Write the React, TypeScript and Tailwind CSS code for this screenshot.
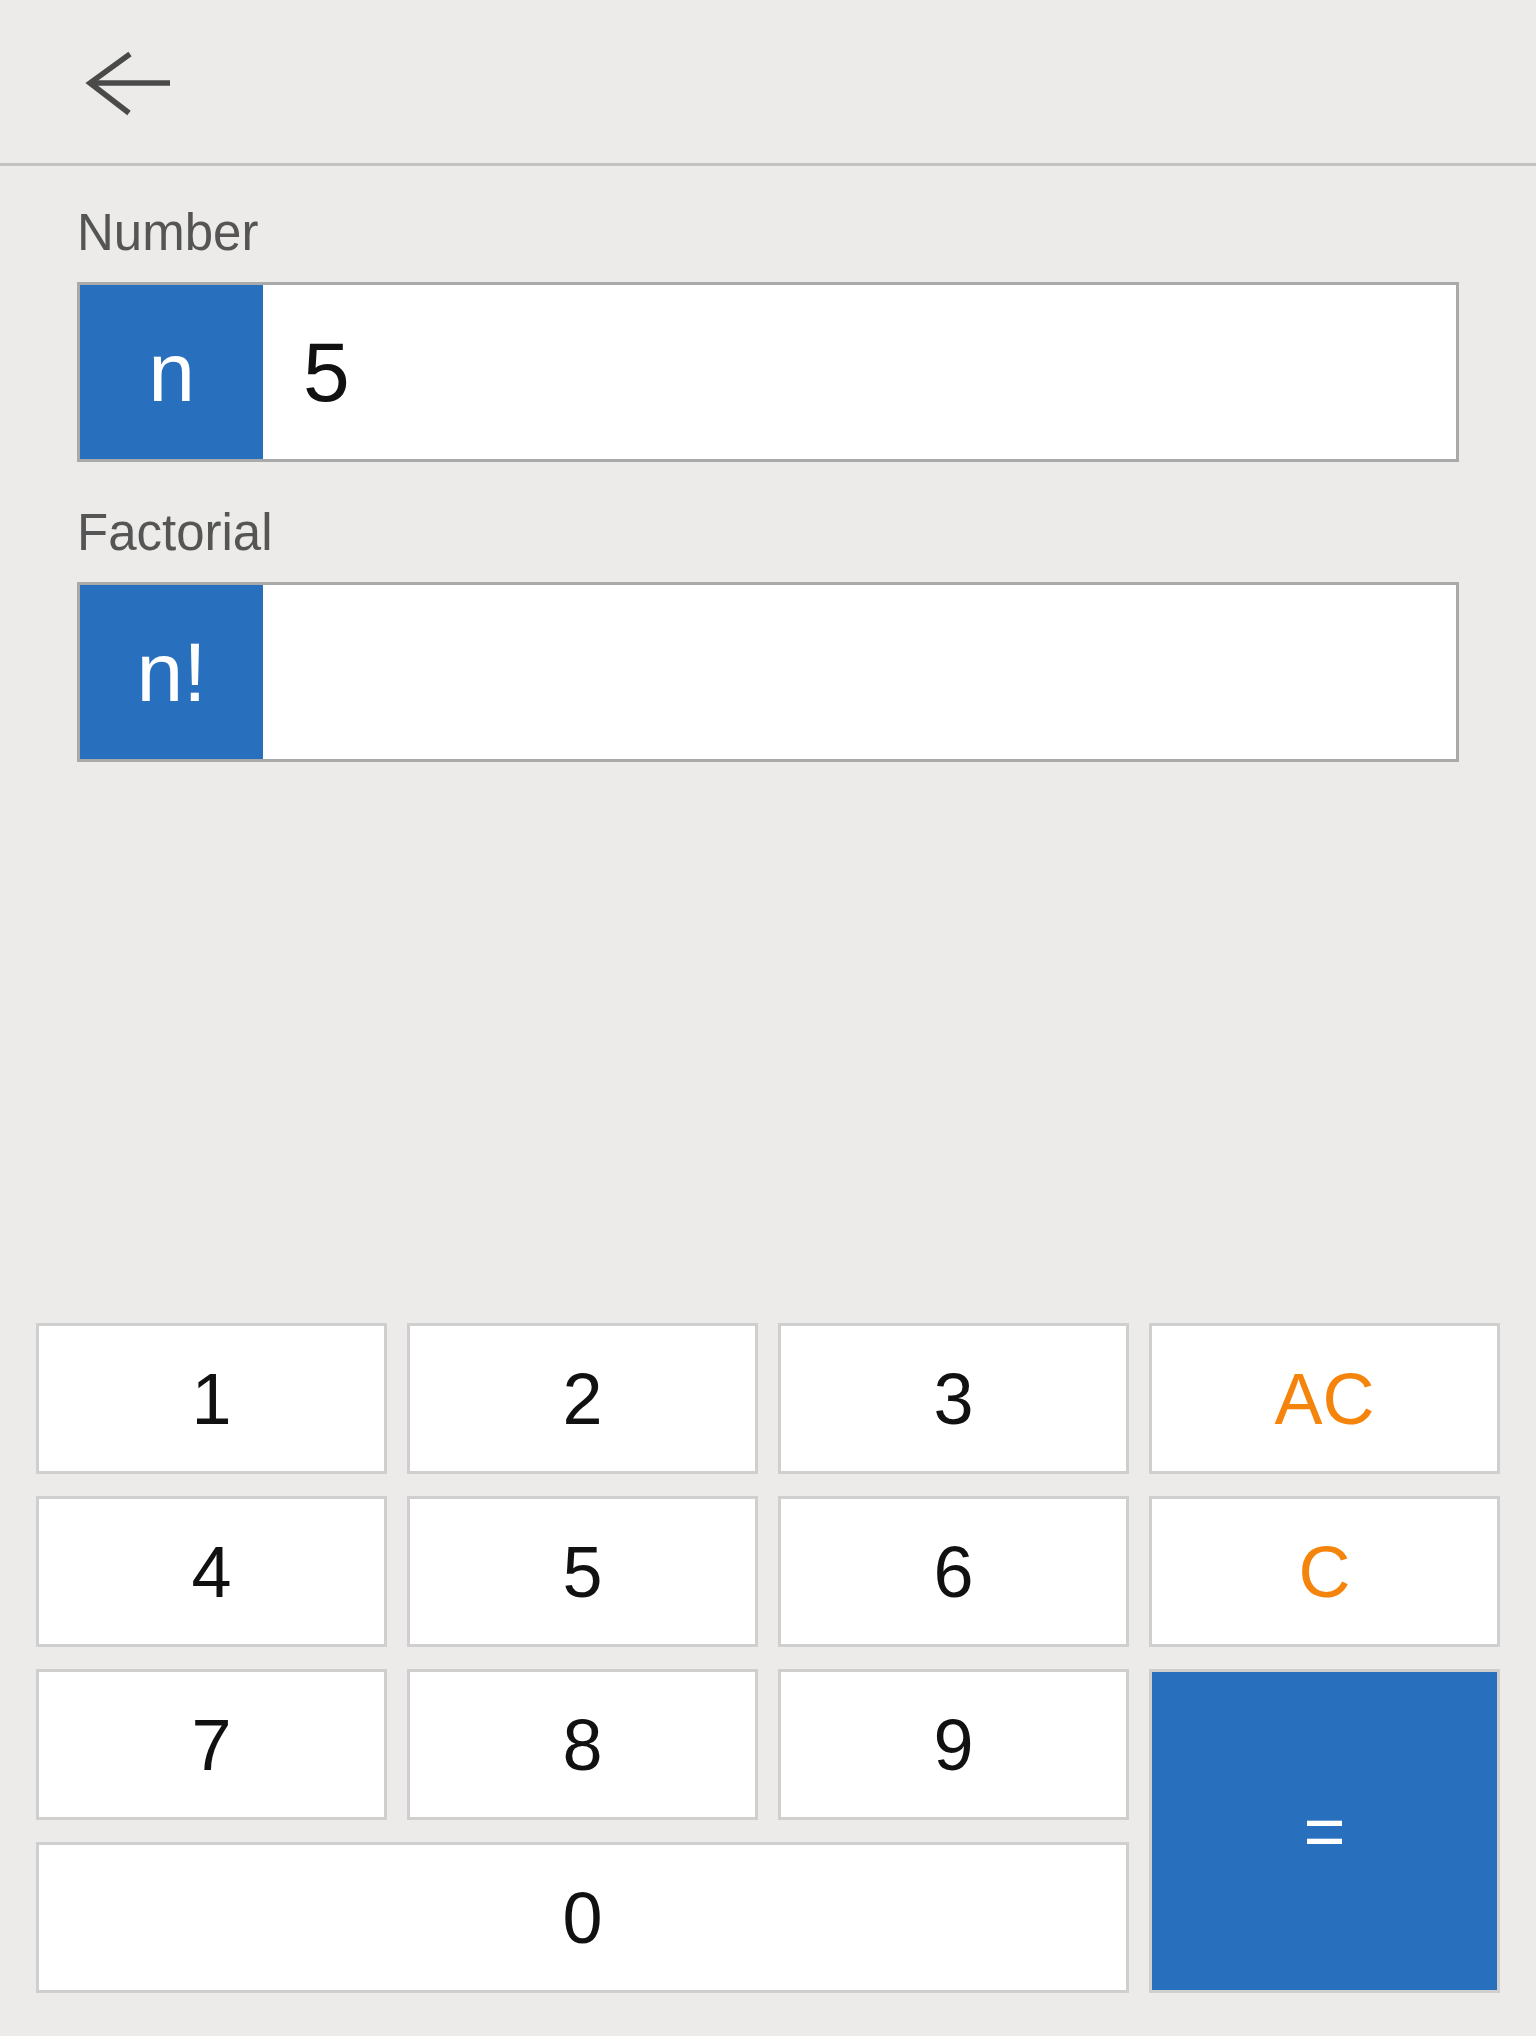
import React from 'react';

const keys: { label: string; kind: 'num' | 'clear' }[] = [
  { label: '1', kind: 'num' },
  { label: '2', kind: 'num' },
  { label: '3', kind: 'num' },
  { label: 'AC', kind: 'clear' },
  { label: '4', kind: 'num' },
  { label: '5', kind: 'num' },
  { label: '6', kind: 'num' },
  { label: 'C', kind: 'clear' },
];

function Field({ label, tag, value }: { label: string; tag: string; value: string }) {
  return (
    <div className="flex flex-col">
      <div className="text-[51px] leading-[50px] text-[#555555]">{label}</div>
      <div className="mt-[24px] flex h-[180px] border-[3px] border-[#aaaaaa] bg-white">
        <div className="flex w-[183px] shrink-0 items-center justify-center bg-[#2870bd] text-[84px] leading-[84px] text-white">
          {tag}
        </div>
        <div className="flex flex-1 items-center pl-[40px] text-[84px] leading-[84px] text-[#111111]">{value}</div>
      </div>
    </div>
  );
}

function Key({ label, className }: { label: string; className?: string }) {
  return (
    <button
      className={`flex items-center justify-center border-[3px] border-[#cfcfcf] text-[72px] leading-[72px] ${className ?? 'bg-white text-[#111111]'}`}
    >
      {label}
    </button>
  );
}

export default function App() {
  return (
    <div className="flex h-screen flex-col bg-[#ecebe9] font-['Liberation_Sans',Arial,sans-serif]">
      <header className="flex h-[166px] shrink-0 items-center border-b-[3px] border-[#c2c2c2] pl-[84px]">
        <svg width="90" height="70" viewBox="0 0 90 70" className="mt-[6px]" fill="none">
          <path d="M86 33H7" stroke="#4a4a4a" strokeWidth="5.5" />
          <path d="M46 4L6 33L45 63" stroke="#4a4a4a" strokeWidth="5.5" />
        </svg>
      </header>

      <main className="flex flex-col gap-[46px] px-[77px] pt-[42px]">
        <Field label="Number" tag="n" value="5" />
        <Field label="Factorial" tag="n!" value="" />
      </main>

      <div className="mt-auto grid grid-cols-4 auto-rows-[151px] gap-x-[20px] gap-y-[22px] px-[36px] pb-[43px]">
        {keys.map((k) => (
          <Key
            key={k.label}
            label={k.label}
            className={k.kind === 'clear' ? 'bg-white text-[#f5840c]' : undefined}
          />
        ))}
        <Key label="7" />
        <Key label="8" />
        <Key label="9" />
        <Key label="=" className="row-span-2 bg-[#2870bd] text-white" />
        <Key label="0" className="col-span-3 bg-white text-[#111111]" />
      </div>
    </div>
  );
}
